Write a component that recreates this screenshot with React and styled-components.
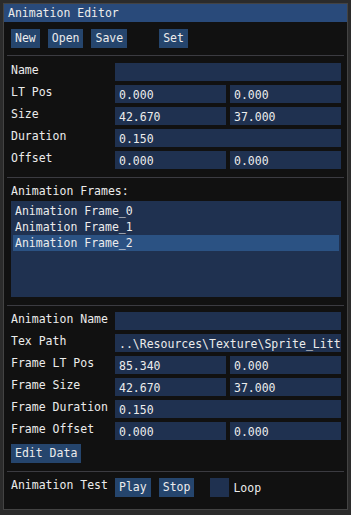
import React from 'react';
import styled, { createGlobalStyle } from 'styled-components';

const GlobalStyle = createGlobalStyle`
  html, body {
    margin: 0;
    padding: 0;
    background: #2b2b2b;
  }
  body {
    font-family: 'DejaVu Sans Mono', 'Liberation Mono', monospace;
    font-size: 11.5px;
    color: #ececec;
  }
`;

const frames = ['Animation Frame_0', 'Animation Frame_1', 'Animation Frame_2'];

const Window = styled.div`
  margin: 3px;
  width: 345px;
  height: 507px;
  box-sizing: border-box;
  border: 1px solid #434343;
  background: #111111;
  display: flex;
  flex-direction: column;
`;

const TitleBar = styled.div`
  height: 18px;
  line-height: 18px;
  padding: 0 4px;
  background: #294a7a;
  white-space: nowrap;
`;

const Body = styled.div`
  padding: 0 6px 0 7px;
  display: flex;
  flex-direction: column;
`;

const Toolbar = styled.div`
  display: flex;
  gap: 8px;
  margin-top: ${(p) => p.$top ?? 7}px;
`;

const Button = styled.div`
  height: 19px;
  line-height: 19px;
  padding: 0 4px;
  background: #25456d;
  white-space: nowrap;
  margin-left: ${(p) => p.$offset || 0}px;
`;

const Separator = styled.div`
  height: 1px;
  background: #3b3b41;
  margin: ${(p) => p.$top}px -3px 0 -4px;
`;

const Rows = styled.div`
  display: flex;
  flex-direction: column;
  gap: 4px;
  margin-top: ${(p) => p.$top}px;
`;

const Row = styled.div`
  display: grid;
  grid-template-columns: 104px 1fr;
  height: 18px;
`;

const Label = styled.div`
  line-height: 15px;
  white-space: nowrap;
`;

const Fields = styled.div`
  display: grid;
  grid-template-columns: repeat(${(p) => p.$count}, 1fr);
  gap: 4px;
`;

const Input = styled.div`
  background: #1f3150;
  height: 18px;
  line-height: 18px;
  padding: 1px 4px 0;
  box-sizing: border-box;
  overflow: hidden;
  white-space: nowrap;
`;

const SectionLabel = styled.div`
  margin-top: 5px;
  line-height: 16px;
`;

const ListBox = styled.div`
  margin-top: 2px;
  height: 96px;
  box-sizing: border-box;
  padding: 2px 2px;
  background: #1f3150;
`;

const ListItem = styled.div`
  height: 16px;
  line-height: 16px;
  padding-left: 2px;
  background: ${(p) => (p.$selected ? '#2b5283' : 'transparent')};
  white-space: nowrap;
`;

const TestRow = styled.div`
  display: grid;
  grid-template-columns: 104px auto;
  margin-top: 6px;
`;

const Controls = styled.div`
  display: flex;
  align-items: center;
  gap: 8px;
`;

const Checkbox = styled.div`
  width: 19px;
  height: 19px;
  background: #1f3150;
  margin-left: 8px;
`;

const CheckLabel = styled.span`
  margin-left: -4px;
`;

const Field = ({ label, values = [], count = 1 }) => (
  <Row>
    <Label>{label}</Label>
    <Fields $count={count}>
      {Array.from({ length: count }).map((_, i) => (
        <Input key={i}>{values[i] || ''}</Input>
      ))}
    </Fields>
  </Row>
);

const App = () => {
  return (
    <>
      <GlobalStyle />
      <Window>
        <TitleBar>Animation Editor</TitleBar>
        <Body>
          <Toolbar>
            <Button>New</Button>
            <Button>Open</Button>
            <Button>Save</Button>
            <Button $offset={24}>Set</Button>
          </Toolbar>
          <Separator $top={7} />
          <Rows $top={7}>
            <Field label="Name" />
            <Field label="LT Pos" count={2} values={['0.000', '0.000']} />
            <Field label="Size" count={2} values={['42.670', '37.000']} />
            <Field label="Duration" values={['0.150']} />
            <Field label="Offset" count={2} values={['0.000', '0.000']} />
          </Rows>
          <Separator $top={8} />
          <SectionLabel>Animation Frames:</SectionLabel>
          <ListBox>
            {frames.map((f, i) => (
              <ListItem key={f} $selected={i === 2}>
                {f}
              </ListItem>
            ))}
          </ListBox>
          <Separator $top={8} />
          <Rows $top={6}>
            <Field label="Animation Name" />
            <Field label="Tex Path" values={['..\\Resources\\Texture\\Sprite_Litt']} />
            <Field label="Frame LT Pos" count={2} values={['85.340', '0.000']} />
            <Field label="Frame Size" count={2} values={['42.670', '37.000']} />
            <Field label="Frame Duration" values={['0.150']} />
            <Field label="Frame Offset" count={2} values={['0.000', '0.000']} />
            <Toolbar $top={0}>
              <Button>Edit Data</Button>
            </Toolbar>
          </Rows>
          <Separator $top={8} />
          <TestRow>
            <Label>Animation Test</Label>
            <Controls>
              <Button>Play</Button>
              <Button>Stop</Button>
              <Checkbox />
              <CheckLabel>Loop</CheckLabel>
            </Controls>
          </TestRow>
        </Body>
      </Window>
    </>
  );
};

export default App;
